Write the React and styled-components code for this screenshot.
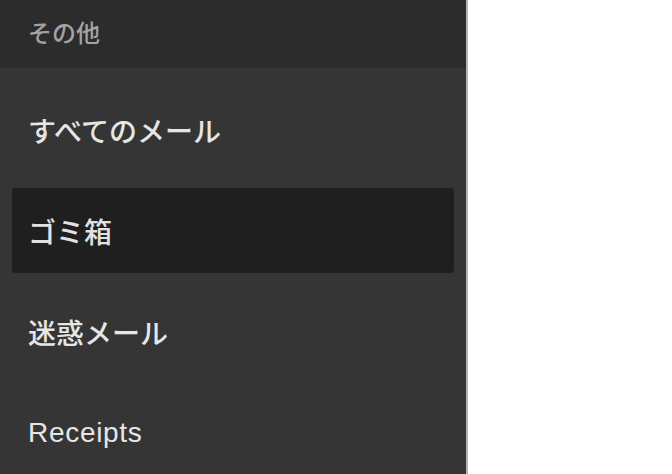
import React from "react";
import styled, { createGlobalStyle } from "styled-components";

const GlobalStyle = createGlobalStyle`
  html, body {
    margin: 0;
    padding: 0;
    background: #ffffff;
    height: 100%;
    overflow: hidden;
  }
  #root {
    height: 100%;
  }
`;

const font = `"Liberation Sans", "Noto Sans CJK JP", sans-serif`;

const Screen = styled.div`
  display: flex;
  height: 474px;
  width: 672px;
  font-family: ${font};
`;

const Sidebar = styled.nav`
  width: 466px;
  flex-shrink: 0;
  background: #353535;
  border-right: 2px solid #b4b4b4;
  display: flex;
  flex-direction: column;
  overflow: hidden;
`;

const SectionHeader = styled.div`
  height: 68px;
  flex-shrink: 0;
  background: #2c2c2c;
  display: flex;
  align-items: center;
  padding: 0 0 6px 28px;
  box-sizing: border-box;
  color: #a3a3a3;
  font-size: 24px;
  font-weight: 500;
`;

const List = styled.ul`
  list-style: none;
  margin: 0;
  padding: 11px 0 0;
`;

const Row = styled.li`
  height: 101px;
  padding: 8px 12px;
  box-sizing: border-box;
`;

const RowInner = styled.div`
  height: 100%;
  display: flex;
  align-items: center;
  padding-left: 16px;
  border-radius: 3px;
  background: ${(p) => (p.$active ? "#1f1f1f" : "transparent")};
  color: ${(p) => (p.$active ? "#e2e2e2" : "#e6e6e6")};
  font-size: 28px;
  font-weight: 500;
  letter-spacing: ${(p) => (p.$latin ? "0.7px" : "0")};
`;

const Content = styled.main`
  flex: 1;
  background: #ffffff;
`;

const items = [
  { label: "すべてのメール" },
  { label: "ゴミ箱", active: true },
  { label: "迷惑メール" },
  { label: "Receipts", latin: true },
];

export default function App() {
  return (
    <>
      <GlobalStyle />
      <Screen>
        <Sidebar>
          <SectionHeader>その他</SectionHeader>
          <List>
            {items.map((item) => (
              <Row key={item.label}>
                <RowInner $active={item.active} $latin={item.latin}>
                  {item.label}
                </RowInner>
              </Row>
            ))}
          </List>
        </Sidebar>
        <Content />
      </Screen>
    </>
  );
}
